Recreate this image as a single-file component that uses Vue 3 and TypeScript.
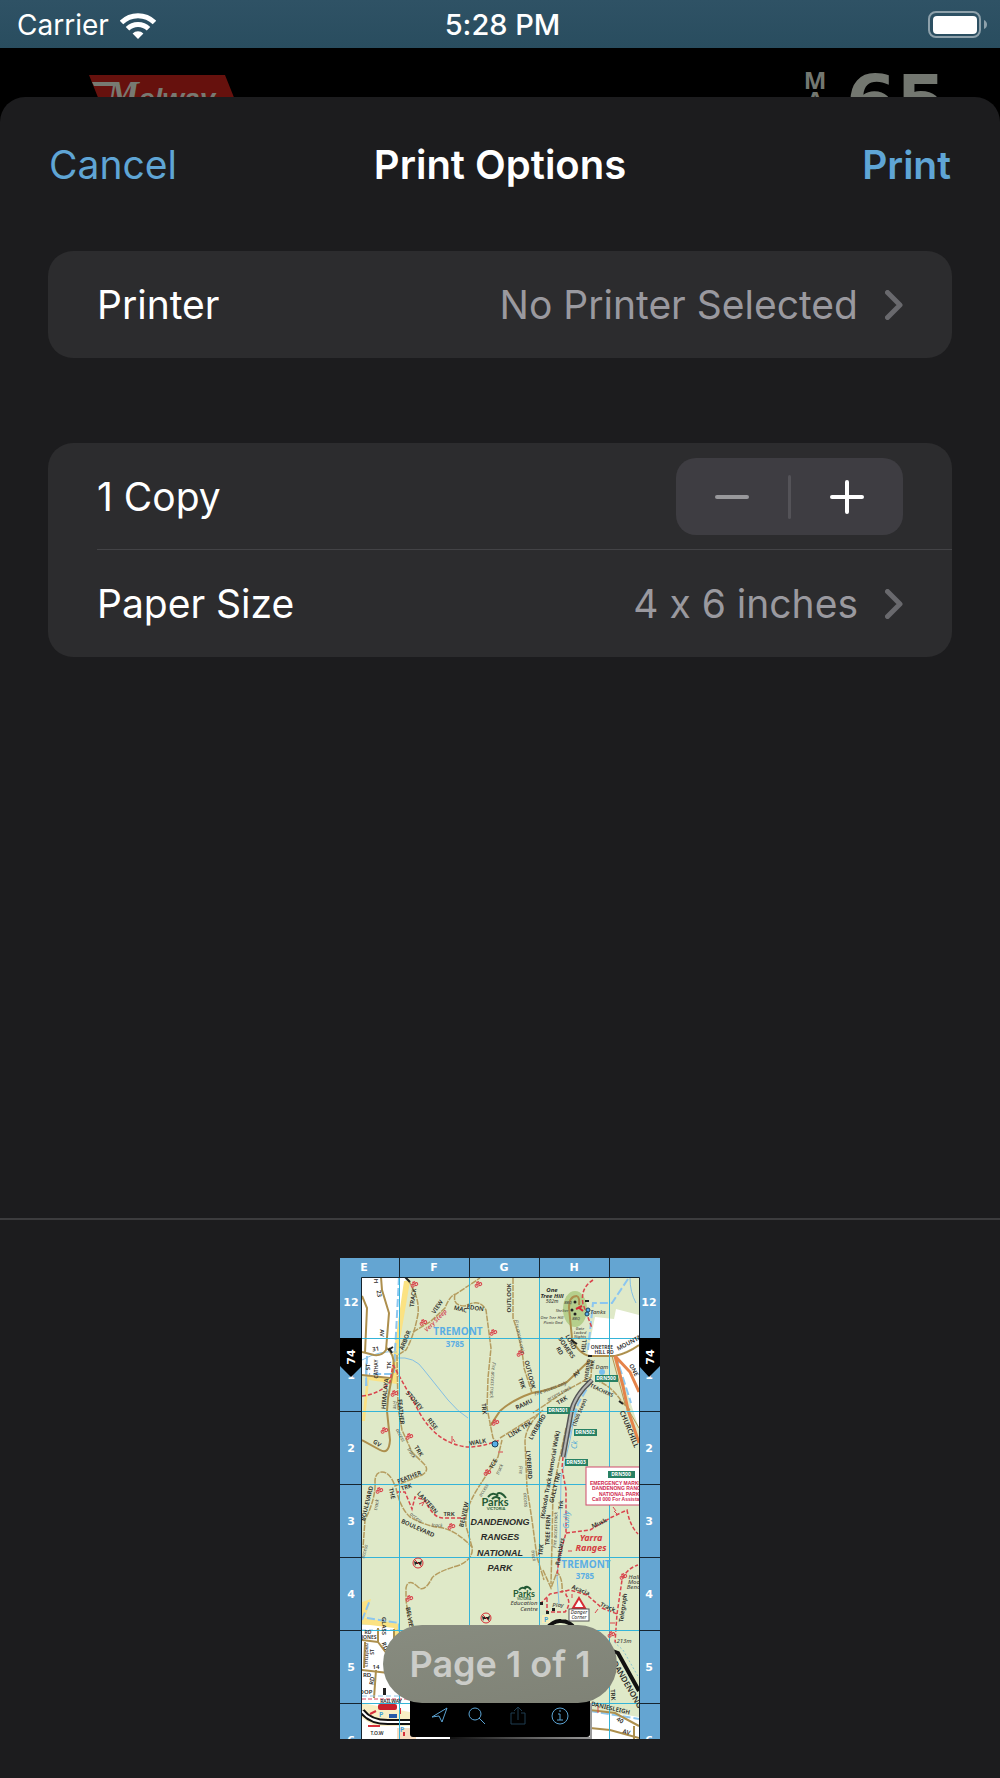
<script setup lang="ts">
import { computed, ref } from 'vue'

interface Label {
  t: string
  x: number
  y: number
  r?: number
  c?: string
  s?: number
}

const copies = ref(1)
const copyLabel = computed(() => `${copies.value} ${copies.value === 1 ? 'Copy' : 'Copies'}`)

const gridX = [59, 129, 199, 269]
const gridY = [80, 153, 226, 299, 372, 445]

const columns = [
  { t: 'E', x: 24 },
  { t: 'F', x: 94 },
  { t: 'G', x: 164 },
  { t: 'H', x: 234 },
]
const rows = [
  { t: '12', y: 48 },
  { t: '1', y: 121 },
  { t: '2', y: 194 },
  { t: '3', y: 267 },
  { t: '4', y: 340 },
  { t: '5', y: 413 },
  { t: '6', y: 486 },
]

const streets = [
  'M41 19 42 32 49 55 46 92Q42 98 34 97L22 94',
  'M22 38 27 50 25 95',
  'M47 90Q54 96 54 108L48 140 47 153 50 182Q49 197 40 192L22 182',
  'M22 117 50 120',
  'M237 38Q229 38 229 50L232 80Q238 96 250 98L275 98Q288 95 299 87',
  'M237 38Q240 40 239 47',
  'M250 102 227 124Q212 132 192 135Q172 142 160 153L150 168',
  'M38 370 38 384 47 396 47 410',
  'M22 412 75 418M36 412 34 440M22 382 38 384M25 384 24 410M54 371 54 380 74 400',
  'M250 452 275 455 299 468M250 470 270 472 299 480M294 468V481',
]
const tracks = [
  'M68 22Q80 40 78 56Q74 78 66 92L58 97',
  'M73 74 90 64 105 50Q110 37 116 36L128 28 140 20M115 36Q112 48 125 48Q140 40 146 52L151 90 148 120 147 150 153 180 158 186',
  'M57 97 58 150 62 172 72 194 84 206Q90 212 82 217L55 228Q50 214 42 214Q35 214 35 224Q36 240 25 262L23 290',
  'M56 230Q60 250 70 259Q85 268 103 270Q118 274 132 289Q134 300 120 307Q96 314 92 320Q84 336 77 328Q68 320 66 330L66 342Q68 360 76 375',
  'M132 289 126 268Q124 252 138 230L158 199 162 182',
  'M173 20V60Q182 85 184 110L192 135',
  'M252 102 251 119 227 132 193 155M255 122Q270 126 282 144L290 152',
  'M203 152Q185 168 185 184L187 230 192 262 197 299 204 322M226 170 213 232 212 285 211 326M203 312 211 330 217 314Q223 320 222 335M160 180 200 155',
]
const walks = [
  'M53 107 67 132 78 152Q96 186 128 189Q142 189 160 182',
  'M22 138Q40 136 50 124L53 107',
  'M57 234H65L72 251 75 239 85 242Q93 260 103 260H125',
  'M253 22Q240 30 243 46L252 70',
  'M223 199 222 210 226 232V275L219 300 217 318',
  'M226 275 250 272 270 260 287 252Q290 268 298 276',
  'M200 346 210 336 230 332 247 337 262 350 277 356 275 385M277 356 282 322Q286 311 298 307',
  'M207 340V354H225Q232 345 226 337V332',
]
const creeks = [
  'M56 100Q75 98 84 112L108 142Q118 154 128 160',
  'M22 102Q40 92 57 94',
  'M236 150 230 182 221 220 220 285 217 318 219 346',
  'M290 20Q290 34 296 45',
  'M27 128Q24 112 27 98',
]

const bikes = [
  [74, 26], [138, 26], [83, 64], [153, 74], [54, 135], [44, 172], [69, 178], [155, 164], [147, 214],
  [39, 232], [111, 268], [180, 95], [69, 340], [271, 376], [283, 318],
]

const labels: Label[] = [
  { t: 'TRACK', x: 75, y: 40, r: -82 },
  { t: 'VIEW', x: 99, y: 50, r: -55 },
  { t: 'MAC', x: 120, y: 53, r: 14 },
  { t: 'EDON', x: 135, y: 52, r: 8 },
  { t: 'Very Steep', x: 97, y: 64, r: -45, c: 'red' },
  { t: 'ARBOR', x: 67, y: 83, r: -68 },
  { t: 'AV', x: 40, y: 75, r: 90 },
  { t: 'H', x: 34, y: 23, r: 90 },
  { t: '23', x: 37, y: 36, r: 80 },
  { t: '31', x: 36, y: 93, r: -8 },
  { t: 'ST', x: 30, y: 109, r: -90 },
  { t: 'TK', x: 51, y: 107, r: -90 },
  { t: 'CATHAY', x: 38, y: 111, r: -90, s: 5 },
  { t: 'HIMALAYA', x: 47, y: 136, r: -84 },
  { t: 'STONEY', x: 73, y: 144, r: 50 },
  { t: 'FEATHER', x: 59, y: 154, r: 84 },
  { t: 'Fire', x: 53, y: 147, r: 90, c: 'thin' },
  { t: 'RISE', x: 91, y: 167, r: 52 },
  { t: 'GV', x: 36, y: 187, r: 32 },
  { t: 'access', x: 59, y: 178, r: 62, c: 'thin' },
  { t: 'TRK', x: 77, y: 194, r: 58 },
  { t: 'track', x: 70, y: 196, r: 58, c: 'thin' },
  { t: 'FEATHER', x: 70, y: 221, r: -22 },
  { t: 'TRK', x: 67, y: 231, r: -18 },
  { t: 'THE', x: 50, y: 236, r: 76 },
  { t: 'BOULEVARD', x: 29, y: 246, r: -76 },
  { t: 'track', x: 38, y: 247, r: -80, c: 'thin' },
  { t: 'access', x: 26, y: 294, r: -75, c: 'thin' },
  { t: 'LANTERN', x: 86, y: 246, r: 48 },
  { t: 'TRK', x: 109, y: 258 },
  { t: 'BOULEVARD', x: 77, y: 272, r: 24 },
  { t: 'access', x: 75, y: 261, r: 38, c: 'thin' },
  { t: 'track', x: 97, y: 269, r: 4, c: 'thin' },
  { t: 'BELVIEW', x: 126, y: 257, r: -78 },
  { t: 'WALK', x: 138, y: 186, r: -10 },
  { t: 'TCE', x: 155, y: 207, r: -60 },
  { t: 'access', x: 145, y: 233, r: -58, c: 'thin' },
  { t: 'track', x: 161, y: 212, r: -65, c: 'thin' },
  { t: 'TRK', x: 142, y: 151, r: 84 },
  { t: 'Fire access track', x: 151, y: 122, r: 94, c: 'thin' },
  { t: 'OUTLOOK', x: 171, y: 40, r: -90 },
  { t: 'Fire access only', x: 178, y: 79, r: 78, c: 'thin' },
  { t: 'OUTLOOK', x: 188, y: 117, r: 76 },
  { t: 'TRK', x: 180, y: 126, r: 70 },
  { t: 'RAMU', x: 185, y: 148, r: -25 },
  { t: 'Fire access only', x: 211, y: 132, r: -20, c: 'thin' },
  { t: 'AV', x: 238, y: 117, r: -45 },
  { t: 'TRK', x: 223, y: 144, r: -32 },
  { t: 'access track', x: 220, y: 137, r: -28, c: 'thin' },
  { t: 'LINK TRK', x: 181, y: 173, r: -32 },
  { t: 'LYREBIRD', x: 199, y: 170, r: -60 },
  { t: 'LYREBIRD', x: 187, y: 207, r: 86 },
  { t: 'access', x: 184, y: 242, r: 86, c: 'thin' },
  { t: 'Fire', x: 179, y: 212, r: 86, c: 'thin' },
  { t: 'track', x: 192, y: 298, r: 82, c: 'thin' },
  { t: 'TRK', x: 203, y: 292, r: -85 },
  { t: '(Kokoda Track Memorial Walk)', x: 212, y: 217, r: -80 },
  { t: 'TREE FERN', x: 210, y: 272, r: -88, s: 6 },
  { t: 'GULLY TRK', x: 217, y: 230, r: -76 },
  { t: 'Fire access track', x: 217, y: 272, r: -88, c: 'thin' },
  { t: 'Ramblers', x: 222, y: 294, r: -80 },
  { t: 'Trk', x: 223, y: 247, r: -88 },
  { t: 'Gully', x: 229, y: 262, r: -86, c: 'water' },
  { t: 'Ck', x: 237, y: 187, r: -84, c: 'water' },
  { t: '(1000 Steps)', x: 241, y: 155, r: -68, s: 5 },
  { t: 'LORD', x: 229, y: 85, r: 62 },
  { t: 'SOMERS', x: 225, y: 91, r: 56 },
  { t: 'RD', x: 218, y: 94, r: 58 },
  { t: 'HILL', x: 246, y: 88, r: -84 },
  { t: 'LYREBIRD', x: 249, y: 113, r: -82, s: 5 },
  { t: 'TRK', x: 254, y: 107, r: -84, s: 5 },
  { t: 'ONETREE', x: 262, y: 91, s: 5 },
  { t: 'HILL RD', x: 264, y: 96, s: 5 },
  { t: 'MOUNTAIN', x: 293, y: 85, r: -28 },
  { t: 'ONE', x: 292, y: 113, r: 62 },
  { t: 'TEACHERS', x: 261, y: 134, r: 25, s: 5 },
  { t: 'CHURCHILL', x: 287, y: 172, r: 68, s: 7 },
  { t: 'Dam', x: 262, y: 111, c: 'note' },
  { t: 'Tanks', x: 258, y: 56, c: 'note' },
  { t: 'One Tree Hill', x: 212, y: 61, c: 'note small' },
  { t: 'Picnic Gnd', x: 213, y: 66, c: 'note small' },
  { t: 'Gate', x: 240, y: 72, c: 'note small' },
  { t: 'Locked', x: 240, y: 76, c: 'note small' },
  { t: 'Nights', x: 240, y: 80, c: 'note small' },
  { t: 'BBQ', x: 228, y: 46, c: 'note small' },
  { t: 'Shelter', x: 222, y: 54, c: 'note small' },
  { t: 'BBQ', x: 236, y: 62, c: 'note small' },
  { t: 'Musk', x: 260, y: 267, r: -24 },
  { t: 'Acacia', x: 240, y: 334, r: 22 },
  { t: 'Track', x: 267, y: 351, r: 24 },
  { t: 'Telegraph', x: 285, y: 350, r: -82 },
  { t: 'Hall', x: 294, y: 321, c: 'note' },
  { t: 'Mod', x: 294, y: 326, c: 'note' },
  { t: 'Bench', x: 295, y: 331, c: 'note' },
  { t: 'Play', x: 218, y: 349, c: 'note' },
  { t: 'Education', x: 184, y: 347, c: 'note' },
  { t: 'Centre', x: 189, y: 353, c: 'note' },
  { t: '213m', x: 284, y: 385, c: 'note' },
  { t: 'DANDENONG', x: 285, y: 428, r: 60, s: 8 },
  { t: 'TRK', x: 271, y: 437, r: 86 },
  { t: 'DANIESLEIGH', x: 270, y: 452, r: 13, s: 6 },
  { t: 'AV', x: 286, y: 476, r: 15 },
  { t: '40', x: 279, y: 464, r: 30 },
  { t: 'BELVIEW', x: 68, y: 362, r: 80 },
  { t: 'GLASS', x: 42, y: 368, r: 90 },
  { t: 'RD', x: 43, y: 389, r: 70 },
  { t: 'RD', x: 28, y: 376, s: 5 },
  { t: 'JONES', x: 29, y: 381, s: 5 },
  { t: 'LITTLEJOHN', x: 28, y: 397, r: -88, s: 4 },
  { t: 'ST', x: 34, y: 394, r: -90, s: 5 },
  { t: '14', x: 36, y: 411 },
  { t: 'RD', x: 27, y: 419 },
  { t: 'RD', x: 34, y: 423, r: -84 },
  { t: 'DOP', x: 26, y: 436 },
  { t: 'RAILWAY', x: 51, y: 445, s: 5 },
  { t: 'T.O.W', x: 37, y: 477, s: 5 },
]

const signs = [
  { t: 'DRN500', x: 255, y: 117 },
  { t: 'DRN501', x: 207, y: 149 },
  { t: 'DRN502', x: 234, y: 171 },
  { t: 'DRN503', x: 225, y: 201 },
]
</script>

<template>
  <div class="screen">
    <header class="status">
      <div class="carrier">
        <span>Carrier</span>
        <svg width="36" height="27" viewBox="0 0 36 27" aria-label="Wi-Fi">
          <g fill="none" stroke="#fff" stroke-width="5">
            <path d="M1.5 10.5a23.5 23.5 0 0 1 33 0" />
            <path d="M7.5 16.8a15 15 0 0 1 21 0" />
          </g>
          <path d="M18 27l-5.4-5.6a7.6 7.6 0 0 1 10.8 0z" fill="#fff" />
        </svg>
      </div>
      <time>5:28 PM</time>
      <svg class="battery" width="60" height="28" viewBox="0 0 60 28" aria-label="Battery full">
        <rect x="1" y="1" width="51" height="25" rx="7" fill="none" stroke="#8ea1ab" stroke-width="2" />
        <rect x="5" y="5" width="44" height="18" rx="4" fill="#fff" />
        <path d="M56 9q3 1.5 3 4.5t-3 4.5z" fill="#8ea1ab" />
      </svg>
    </header>

    <div class="behind">
      <svg width="152" height="50" viewBox="0 0 152 50" aria-label="Melway">
        <path d="M0 0H136L152 40H16Z" fill="#66110d" />
        <path d="M3 7H27L31 11H5Z" fill="#777a72" />
        <text class="logo-m" x="18" y="31">M</text>
        <text class="logo-rest" x="50" y="33">elway</text>
      </svg>
      <svg width="142" height="60" viewBox="0 0 142 60" fill="#737770" overflow="visible">
        <g class="map-word">
          <text x="10" y="14" text-anchor="middle">M</text>
          <text x="10" y="34" text-anchor="middle">A</text>
        </g>
        <text class="map-number" x="41" y="51">65</text>
      </svg>
    </div>

    <main class="sheet">
      <nav class="bar">
        <button type="button" class="link">Cancel</button>
        <h1>Print Options</h1>
        <button type="button" class="link strong">Print</button>
      </nav>

      <section class="group">
        <button type="button" class="row">
          <span>Printer</span>
          <span class="value">No Printer Selected</span>
          <svg class="chevron" width="18" height="30" viewBox="0 0 18 30">
            <path d="M2.5 2.5 15 15 2.5 27.5" />
          </svg>
        </button>
      </section>

      <section class="group">
        <div class="row">
          <span>{{ copyLabel }}</span>
          <div class="stepper">
            <button type="button" aria-label="Fewer copies" :disabled="copies === 1" @click="copies--">
              <svg width="34" height="34" viewBox="0 0 34 34"><path d="M2 17H32" /></svg>
            </button>
            <i></i>
            <button type="button" aria-label="More copies" @click="copies++">
              <svg width="34" height="34" viewBox="0 0 34 34"><path d="M2 17H32M17 2V32" /></svg>
            </button>
          </div>
        </div>
        <hr />
        <button type="button" class="row">
          <span>Paper Size</span>
          <span class="value">4 x 6 inches</span>
          <svg class="chevron" width="18" height="30" viewBox="0 0 18 30">
            <path d="M2.5 2.5 15 15 2.5 27.5" />
          </svg>
        </button>
      </section>

      <section class="preview">
        <div class="page">
          <svg class="map" width="320" height="481" viewBox="0 0 320 481">
            <defs>
              <clipPath id="area"><rect x="22" y="19" width="277" height="462" /></clipPath>
              <linearGradient id="fade" x1="0" x2="1">
                <stop offset="0" stop-color="#111" />
                <stop offset="1" stop-color="#999" />
              </linearGradient>
            </defs>
            <rect width="320" height="481" fill="#64a5d2" />
            <g clip-path="url(#area)">
              <rect x="22" y="19" width="277" height="462" fill="#dfe9c8" />
              <path d="M22 19H66L57 92 50 121 22 118Z" fill="#fff" />
              <path d="M64 23H70L58 94 57 126 29 122 25 163H22L27 118 50 120 54 92Z" fill="#fbe283" />
              <path d="M255 59 274 61 276 51 299 57V87L275 98H247ZM275 98 299 88V170Z" fill="#fff" />
              <path d="M22 367H58V376L75 400V481H22Z" fill="#fff" />
              <path d="M250 451 299 459V481H60V451Z" fill="#fff" />
              <path d="M22 344 31 341 25 360 59 366V382H54V370L22 366Z" fill="#fbe283" />
              <path d="M22 445 75 455V468L35 468 22 460Z" fill="#f9efc4" />
              <path d="M57 470H76V481H57Z" fill="#f7dcc0" />
              <ellipse cx="235" cy="51" rx="12" ry="18" fill="#b5cf8c" />

              <g class="creek"><path v-for="d in creeks" :key="d" :d="d" /></g>
              <path class="boundary" d="M59 19 55 94 54 116H29M26 128 27 98M288 21 272 45H253L248 92M252 122 238 146 228 182M27 360 59 365V378M22 362 30 342M276 98 291 145M250 453 299 461" />
              <path d="M22 372H60M63 373V381" stroke="#92c5e8" fill="none" stroke-dasharray="4 3" />
              <g class="street"><path v-for="d in streets" :key="d" :d="d" /></g>
              <g class="track" stroke-width="1.5"><path v-for="d in tracks" :key="d" :d="d" /></g>
              <g class="walk" stroke-width="1.5"><path v-for="d in walks" :key="d" :d="d" /></g>

              <g fill="none">
                <path d="M275 98 283 128 288 152 299 185M275 98 290 114 299 134" stroke="#e5834a" stroke-width="3" />
                <path d="M272 98 285 146 299 170" stroke="#b59553" stroke-width="1" />
                <path d="M252 122Q234 138 231 155L223 199" stroke="#555" stroke-width="5" />
                <path d="M252 122Q234 138 231 155L223 199" stroke="#b4b4b0" stroke-width="2" />
                <path d="M206 371Q214 362 221 363 230 363 235 371" stroke="#111" stroke-width="4" />
                <path d="M270 392 278 395 299 433" stroke="#111" stroke-width="4" />
                <path d="M274 384 283 392 299 420" stroke="#8cc5cf" stroke-width="1" stroke-dasharray="2 2" />
                <path d="M22 453Q30 464 48 464H76" stroke="#111" stroke-width="6" />
                <path d="M22 453Q30 464 48 464H76" stroke="#fff" stroke-width="2" />
                <path d="M22 441H70" stroke="#d84461" stroke-dasharray="4 2" />
                <path d="M22 438H75" stroke="#92c5e8" stroke-dasharray="5 3" />
                <path d="M28 468H40M30 456 36 453M60 450V456M64 474V478" stroke="#d62f3b" stroke-width="2" />
              </g>
              <rect x="38" y="446" width="19" height="6" rx="2" fill="#c9222c" />
              <path d="M49 456H57V460H49Z" fill="#285aa8" />
              <g class="parking">
                <text x="39" y="459">P</text><text x="60" y="474">P</text>
                <rect x="202" y="357" width="8" height="8" fill="#f7edb9" /><text x="204" y="364">P</text>
              </g>

              <g class="grid">
                <path v-for="x in gridX" :key="x" :d="`M${x + 0.5} 19V481`" />
                <path v-for="y in gridY" :key="y" :d="`M22 ${y + 0.5}H299`" />
              </g>

              <g class="bike">
                <g v-for="([x, y], i) in bikes" :key="i" :transform="`translate(${x} ${y}) rotate(-25)`">
                  <circle cx="-2" cy="1" r="1.5" /><circle cx="2" cy="1" r="1.5" />
                  <path d="M-2 1 0-2 2 1M-1-2H2" />
                </g>
                <path d="M112 178V184M113 181 115 184M79 246 84 244 82 248M158 194H163M228 293H232M274 253 278 257M273 249 276 253M255 355 258 351M232 336V340M270 365H275M98 449V455M258 448V455" />
              </g>

              <text
                v-for="(l, i) in labels"
                :key="i"
                class="label"
                :class="l.c"
                :font-size="l.s ?? 6"
                :transform="`translate(${l.x} ${l.y}) rotate(${l.r ?? 0})`"
              >{{ l.t }}</text>

              <g class="suburb">
                <text x="118" y="77" font-size="10">TREMONT</text><text x="115" y="89" font-size="8">3785</text>
                <text x="246" y="310" font-size="10">TREMONT</text><text x="245" y="321" font-size="8">3785</text>
              </g>
              <g class="hill">
                <text x="212" y="34">One</text><text x="212" y="40">Tree Hill</text>
                <text x="212" y="45" class="plain">502m</text>
              </g>
              <g class="range"><text x="251" y="283">Yarra</text><text x="251" y="293">Ranges</text></g>
              <g class="park">
                <text x="160" y="267">DANDENONG</text><text x="160" y="282">RANGES</text>
                <text x="160" y="298">NATIONAL</text><text x="160" y="313">PARK</text>
              </g>
              <g class="parks-logo">
                <path d="M148 239Q153 233 158 238M152 241Q156 237 160 241M157 236Q161 233 166 240" />
                <text x="155" y="248" font-size="11">Parks</text>
                <text x="156" y="252" font-size="4">VICTORIA</text>
                <path d="M179 332Q182 328 186 331M184 330Q188 327 191 332" />
                <text x="184" y="339" font-size="9">Parks</text>
                <text x="184" y="342" font-size="3">VICTORIA</text>
              </g>

              <g fill="#222">
                <circle cx="235" cy="44" r="1.5" /><circle cx="232" cy="52" r="1.5" /><circle cx="235" cy="56" r="1.5" />
                <path d="M245 42h4v2h-4zM212 350h3v3h-3zM200 344h3v3h-3zM206 353h3v3h-3zM43 430h3v7h-3z" />
                <path d="M65 19 70 24M48 92 53 89M49 90 52 95M231 82 237 86M248 98H252M279 143 283 146" stroke="#222" stroke-width="2" />
              </g>
              <path d="M236 51 242 48M238 49 243 53" stroke="#d52c35" stroke-width="2" />
              <g fill="#58ade6" stroke="#17405e">
                <circle cx="248" cy="52" r="2" /><circle cx="247" cy="56" r="2" /><circle cx="155" cy="186" r="3" />
              </g>
              <circle cx="262" cy="114" r="3" fill="#79bfee" />

              <g v-for="s in signs" :key="s.t" class="sign">
                <rect :x="s.x" :y="s.y" width="23" height="7" />
                <text :x="s.x + 11" :y="s.y + 5">{{ s.t }}</text>
              </g>
              <rect x="246" y="209" width="60" height="38" fill="#fff" stroke="#cf4a6b" />
              <g class="sign"><rect x="268" y="213" width="27" height="7" /><text x="281" y="218">DRN500</text></g>
              <g class="emergency">
                <text x="250" y="227">EMERGENCY MARKER</text><text x="252" y="232">DANDENONG RANGES</text>
                <text x="259" y="238">NATIONAL PARK</text><text x="252" y="243">Call 000 For Assistance</text>
              </g>

              <g v-for="p in [[78, 305], [146, 360]]" :key="p[0]" :transform="`translate(${p[0]} ${p[1]})`">
                <path d="M-4-2-2-1H2L4-3 3 3 2 1H-2L-3 3Z" fill="#222" />
                <circle r="5" fill="none" stroke="#d52c35" /><path d="M-4-4 4 4" stroke="#d52c35" />
              </g>
              <path d="M239 340 245 350H233Z" fill="#fff" stroke="#d52c35" stroke-width="2" />
              <rect x="229" y="351" width="20" height="12" fill="#fff" stroke="#555" />
              <g class="danger"><text x="239" y="356">Danger</text><text x="239" y="361">Corner</text></g>
            </g>

            <g class="frame">
              <path v-for="x in gridX" :key="x" :d="`M${x + 0.5} 0V19`" />
              <path v-for="y in gridY" :key="y" :d="`M0 ${y + 0.5}H22M299 ${y + 0.5}H320`" />
              <path d="M21.5 481V19.5H299.5V481" />
            </g>
            <g class="coordinate">
              <text v-for="c in columns" :key="c.t" :x="c.x" y="13">{{ c.t }}</text>
              <template v-for="r in rows" :key="r.t">
                <text x="11" :y="r.y">{{ r.t }}</text><text x="309" :y="r.y">{{ r.t }}</text>
              </template>
              <path d="M0 80H22V108L11 119 0 108ZM299 80H320V108L309 119 299 108Z" fill="#000" />
              <text transform="translate(15 99) rotate(-90)">74</text>
              <text transform="translate(314 99) rotate(-90)">74</text>
            </g>

            <path d="M110 480H251V445" fill="none" stroke="url(#fade)" stroke-width="2" />
            <rect x="70" y="435" width="180" height="44" rx="3" fill="#000" />
            <g class="tools">
              <path d="M92 459 107 450 102 464 99 458Z" />
              <circle cx="135" cy="456" r="6" /><path d="M139 460 145 466" />
              <path class="dim" d="M175 455H171V466H185V455H181M178 462V449M174 453 178 449 182 453" />
              <circle cx="220" cy="458" r="8" /><path d="M218 456H220V462M217 462H223M220 452V454" />
            </g>
          </svg>
          <p class="pill">Page 1 of 1</p>
        </div>
      </section>
    </main>
  </div>
</template>

<style>
body {
  margin: 0;
  background: #000;
}
</style>

<style scoped>
.screen {
  display: flex;
  flex-direction: column;
  min-height: 100vh;
  font-family: Inter, 'Liberation Sans', sans-serif;
  font-size: 39px;
  font-variant-ligatures: no-contextual;
  color: #fff;
  background: #000;
}
button {
  font: inherit;
  font-variant-ligatures: inherit;
  color: inherit;
  background: none;
  border: 0;
  padding: 0;
}
.status {
  display: grid;
  grid-template-columns: 1fr auto 1fr;
  align-items: center;
  height: 48px;
  padding: 0 12px 0 17px;
  font-size: 28px;
  line-height: 50px;
  background: linear-gradient(#2f5265, #294d5f);
}
.status time {
  font-size: 29px;
  font-weight: 500;
}
.carrier {
  display: flex;
  align-items: center;
  gap: 11px;
}
.battery {
  justify-self: end;
}
.behind {
  display: flex;
  justify-content: space-between;
  align-items: flex-start;
  height: 77px;
  margin-bottom: -28px;
  padding: 27px 53px 0 89px;
  box-sizing: border-box;
  overflow: hidden;
}
.logo-m {
  font: italic bold 36px 'Liberation Serif', serif;
  fill: #777a72;
}
.logo-rest {
  font: italic bold 28px 'Liberation Sans', sans-serif;
  fill: #777a72;
}
.map-word {
  font: bold 24px 'Noto Sans', sans-serif;
}
.map-number {
  font: bold 72px 'DejaVu Sans', sans-serif;
}
.sheet {
  position: relative;
  display: flex;
  flex-direction: column;
  flex: 1;
  background: #1c1c1e;
  border-radius: 25px 25px 0 0;
}
.bar {
  display: grid;
  grid-template-columns: 1fr auto 1fr;
  align-items: center;
  height: 134px;
  padding: 0 49px;
  margin-bottom: 20px;
}
.bar h1 {
  margin: 0;
  font-size: 40px;
  font-weight: 600;
}
.link {
  justify-self: start;
  color: #5fa5d5;
}
.link.strong {
  justify-self: end;
  font-weight: 600;
}
.group {
  margin: 0 48px 85px;
  border-radius: 25px;
  background: #2c2c2e;
}
.row {
  display: flex;
  align-items: center;
  width: 100%;
  height: 107px;
  padding: 0 49px;
  box-sizing: border-box;
}
.value {
  margin-left: auto;
  color: #9a999f;
}
.chevron {
  margin-left: 27px;
  fill: none;
  stroke: #69696d;
  stroke-width: 5;
  stroke-linecap: round;
  stroke-linejoin: round;
}
.group hr {
  height: 1px;
  margin: -1px 0 0 49px;
  border: 0;
  background: #434346;
}
.stepper {
  display: flex;
  align-items: center;
  width: 227px;
  height: 77px;
  margin-left: auto;
  border-radius: 20px;
  background: #3e3d42;
}
.stepper button {
  display: flex;
  flex: 1;
  justify-content: center;
}
.stepper svg {
  fill: none;
  stroke: #fff;
  stroke-width: 4;
  stroke-linecap: round;
}
.stepper button:disabled svg {
  stroke: #98989b;
}
.stepper i {
  width: 3px;
  height: 44px;
  border-radius: 2px;
  background: #545358;
}
.preview {
  display: flex;
  justify-content: center;
  margin-top: auto;
  padding: 38px 0 39px;
  border-top: 2px solid #3c3c3e;
}
.page {
  position: relative;
}
.map {
  display: block;
}
.pill {
  position: absolute;
  bottom: 36px;
  left: 43px;
  right: 43px;
  margin: 0;
  border-radius: 39px;
  font-size: 36px;
  font-weight: 600;
  line-height: 78px;
  text-align: center;
  white-space: nowrap;
  color: #cbccc8;
  background: linear-gradient(170deg, #888c80, #7f8276);
}
.map text {
  font-family: 'Noto Sans', sans-serif;
  fill: #2b2b28;
}
.label {
  text-anchor: middle;
  font-weight: 600;
}
.map .thin {
  font-size: 5px;
  font-style: italic;
  font-weight: 400;
  fill: #55554c;
}
.map .red {
  font-style: italic;
  fill: #cf4650;
}
.map .water {
  font-size: 8px;
  font-style: italic;
  font-weight: 400;
  fill: #4ea8d8;
}
.map .note {
  font-style: italic;
  font-weight: 500;
  fill: #4c4c45;
}
.map .small {
  font-size: 4px;
}
.creek path {
  fill: none;
  stroke: #83bfe4;
  stroke-width: 1;
}
.boundary {
  fill: none;
  stroke: #8cc6ef;
  stroke-width: 2;
  stroke-dasharray: 8 3;
}
.street path {
  fill: none;
  stroke: #ad8f4d;
  stroke-width: 2;
}
.track path {
  fill: none;
  stroke: #b59c5f;
  stroke-dasharray: 6 1;
}
.walk path {
  fill: none;
  stroke: #d9444d;
  stroke-dasharray: 4 2;
}
.grid path {
  stroke: #35b4d8;
  stroke-width: 1;
}
.bike {
  fill: none;
  stroke: #d9444d;
  stroke-width: 1;
}
.map .parking text {
  font-size: 7px;
  font-weight: 600;
  fill: #3b9edb;
}
.map .suburb text {
  font-family: 'Open Sans', sans-serif;
  font-weight: 700;
  text-anchor: middle;
  fill: #5baee3;
}
.map .hill text {
  font-size: 6px;
  font-weight: 700;
  font-style: italic;
  text-anchor: middle;
}
.map .hill .plain {
  font-size: 5px;
  font-weight: 400;
}
.map .range text {
  font-size: 9px;
  font-weight: 700;
  font-style: italic;
  text-anchor: middle;
  fill: #d53c3f;
}
.map .park text {
  font-family: 'Liberation Sans', sans-serif;
  font-size: 9px;
  font-weight: 700;
  font-style: italic;
  text-anchor: middle;
}
.parks-logo path {
  fill: none;
  stroke: #245a35;
  stroke-width: 2;
}
.map .parks-logo text {
  font-family: Lato, sans-serif;
  font-weight: 700;
  text-anchor: middle;
  fill: #245a35;
}
.sign rect {
  fill: #288164;
}
.map .sign text {
  font-size: 5px;
  font-weight: 700;
  text-anchor: middle;
  fill: #fff;
}
.map .emergency text {
  font-family: 'Liberation Sans', sans-serif;
  font-size: 5px;
  font-weight: 700;
  fill: #cf2850;
}
.map .danger text {
  font-size: 5px;
  font-style: italic;
  text-anchor: middle;
}
.frame path {
  fill: none;
  stroke: #16242e;
  stroke-width: 1;
}
.map .coordinate text {
  font-family: 'DejaVu Sans', sans-serif;
  font-size: 11px;
  font-weight: 700;
  text-anchor: middle;
  fill: #fff;
}
.tools {
  fill: none;
  stroke: #5ba3d3;
  stroke-width: 1;
}
.tools .dim {
  stroke: #1e3c50;
}
</style>
